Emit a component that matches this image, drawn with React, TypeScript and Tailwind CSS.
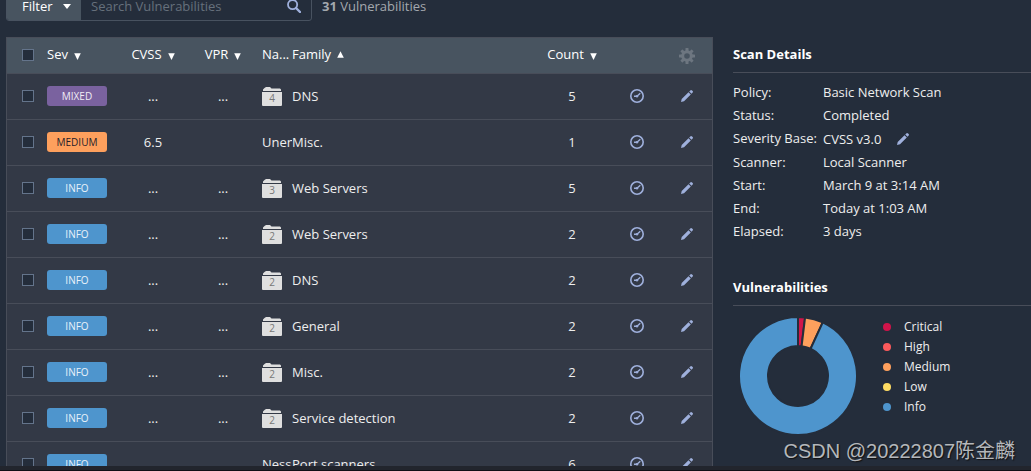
import React from 'react';

type Severity = 'MIXED' | 'MEDIUM' | 'INFO';

interface Vulnerability {
  severity: Severity;
  cvss: string;
  vpr: string;
  name?: string;
  group?: number;
  family: string;
  count: number;
}

const vulnerabilities: Vulnerability[] = [
  { severity: 'MIXED', cvss: '...', vpr: '...', group: 4, family: 'DNS', count: 5 },
  { severity: 'MEDIUM', cvss: '6.5', vpr: '', name: 'Unen', family: 'Misc.', count: 1 },
  { severity: 'INFO', cvss: '...', vpr: '...', group: 3, family: 'Web Servers', count: 5 },
  { severity: 'INFO', cvss: '...', vpr: '...', group: 2, family: 'Web Servers', count: 2 },
  { severity: 'INFO', cvss: '...', vpr: '...', group: 2, family: 'DNS', count: 2 },
  { severity: 'INFO', cvss: '...', vpr: '...', group: 2, family: 'General', count: 2 },
  { severity: 'INFO', cvss: '...', vpr: '...', group: 2, family: 'Misc.', count: 2 },
  { severity: 'INFO', cvss: '...', vpr: '...', group: 2, family: 'Service detection', count: 2 },
  { severity: 'INFO', cvss: '', vpr: '', name: 'Ness', family: 'Port scanners', count: 6 },
];

const badgeStyles: Record<Severity, string> = {
  MIXED: 'bg-[#7a629f] text-[#f0ecf5]',
  MEDIUM: 'bg-[#fea05d] text-[#26202a]',
  INFO: 'bg-[#4e95cd] text-[#e8f2fa]',
};

const details = [
  { label: 'Policy:', value: 'Basic Network Scan' },
  { label: 'Status:', value: 'Completed' },
  { label: 'Severity Base:', value: 'CVSS v3.0', editable: true },
  { label: 'Scanner:', value: 'Local Scanner' },
  { label: 'Start:', value: 'March 9 at 3:14 AM' },
  { label: 'End:', value: 'Today at 1:03 AM' },
  { label: 'Elapsed:', value: '3 days' },
];

const legend = [
  { label: 'Critical', dot: 'bg-[#d0144a]' },
  { label: 'High', dot: 'bg-[#fb5a5c]' },
  { label: 'Medium', dot: 'bg-[#fea05d]' },
  { label: 'Low', dot: 'bg-[#fedb63]' },
  { label: 'Info', dot: 'bg-[#4e95cd]' },
];

function SortArrow({ up = false }: { up?: boolean }) {
  return (
    <svg viewBox="0 0 7 7" className={up ? 'ml-1.5 inline h-[7px] w-[7px] align-[1px]' : 'ml-1.5 inline h-[7px] w-[7px] align-[-1px]'} fill="#fff" aria-hidden="true">
      <path d={up ? 'M.2 6.8 3.5 .3 6.8 6.8z' : 'M.2 .3H6.8L3.5 7z'} />
    </svg>
  );
}

function Pencil() {
  return (
    <svg viewBox="0 0 12 12" className="h-3 w-3" fill="#9fb0dc" aria-hidden="true">
      <path d="M0 12 .7 9 7.5 2.3 9.8 4.5 3 11.3zM8.2 1.6 9.6.3Q10.3-.2 11 .4L11.7 1.1Q12.2 1.7 11.7 2.4L10.5 3.8z" />
    </svg>
  );
}

function Clock() {
  return (
    <svg viewBox="0 0 14 14" className="h-3.5 w-3.5" fill="none" stroke="#9fb0dc" aria-hidden="true">
      <circle cx="7" cy="7" r="6.2" strokeWidth="1.6" />
      <path d="M4 7.2H6.9L10.3 4.3" strokeWidth="1.4" />
      <circle cx="7" cy="7.3" r="1.2" fill="#9fb0dc" stroke="none" />
    </svg>
  );
}

function Gear() {
  return (
    <svg viewBox="0 0 16 16" className="h-4 w-4" aria-hidden="true">
      <g fill="#6d7680">
        <rect x="6.5" y="0" width="3" height="16" rx=".6" />
        <rect x="6.5" y="0" width="3" height="16" rx=".6" transform="rotate(45 8 8)" />
        <rect x="6.5" y="0" width="3" height="16" rx=".6" transform="rotate(90 8 8)" />
        <rect x="6.5" y="0" width="3" height="16" rx=".6" transform="rotate(135 8 8)" />
        <circle cx="8" cy="8" r="5.8" />
      </g>
      <circle cx="8" cy="8" r="2.8" fill="#485460" />
    </svg>
  );
}

function Folder({ count }: { count: number }) {
  return (
    <div className="relative h-[19px] w-5">
      <svg viewBox="0 0 20 19" className="h-[19px] w-5" fill="#dfdfdf" aria-hidden="true">
        <path d="M1 4V2.5L2.5 1 4 0H8L9.5 1.5H18L19 2.5V4zM0 5H20V18Q20 19 19 19H1Q0 19 0 18z" />
      </svg>
      <span className="absolute inset-x-0 bottom-0 text-center text-[10px] leading-[15px] text-[#777]">{count}</span>
    </div>
  );
}

function Tick({ label }: { label: string }) {
  return (
    <input
      type="checkbox"
      aria-label={label}
      className="block h-3 w-3 appearance-none border border-[#64748b] bg-[#242d3b] checked:bg-[#4e95cd]"
    />
  );
}

function point(radius: number, degrees: number) {
  const a = (degrees * Math.PI) / 180;
  return `${(59 + radius * Math.sin(a)).toFixed(2)} ${(59 - radius * Math.cos(a)).toFixed(2)}`;
}

function slice(from: number, to: number) {
  const large = to - from > 180 ? 1 : 0;
  return `M${point(59, from)}A59 59 0 ${large} 1 ${point(59, to)}L${point(30, to)}A30 30 0 ${large} 0 ${point(30, from)}Z`;
}

function Donut() {
  return (
    <svg viewBox="0 0 118 118" className="h-[118px] w-[118px] shrink-0" stroke="#242d3b" strokeWidth="2" role="img" aria-label="Vulnerabilities">
      <path d={slice(0, 6.9)} fill="#d0144a" />
      <path d={slice(6.9, 24.8)} fill="#fea05d" />
      <path d={slice(24.8, 360)} fill="#4e95cd" />
    </svg>
  );
}

function Toolbar() {
  return (
    <div className="-mt-[9px] flex h-[30px] items-center">
      <div className="flex h-full w-[306px] overflow-hidden rounded-[3px] border border-[#485260]">
        <button type="button" className="flex w-[74px] items-center justify-between bg-[#485460] pr-2.5 pl-[15px] text-white">
          Filter
          <svg viewBox="0 0 8 5" className="h-[5px] w-2" fill="#fff" aria-hidden="true">
            <path d="M0 0H8L4 5z" />
          </svg>
        </button>
        <input
          type="text"
          aria-label="Search Vulnerabilities"
          placeholder="Search Vulnerabilities"
          className="min-w-0 flex-1 bg-transparent pl-2.5 text-white outline-none placeholder:text-[#66707c]"
        />
        <button type="button" aria-label="Search" className="pr-2.5">
          <svg viewBox="0 0 14 14" className="h-3.5 w-3.5" fill="none" stroke="#9fb0dc" aria-hidden="true">
            <circle cx="5.6" cy="5.6" r="4.6" strokeWidth="1.8" />
            <path d="M9 9 13 13" strokeWidth="2.4" strokeLinecap="round" />
          </svg>
        </button>
      </div>
      <p className="ml-2.5 text-[#a3a8ae]">
        <b>31</b> Vulnerabilities
      </p>
    </div>
  );
}

function VulnerabilityTable() {
  return (
    <div className="mt-4 border border-[#484d59] bg-[#333946]">
      <table className="w-full table-fixed border-separate border-spacing-0 text-[#eeeeee]">
        <colgroup>
          <col className="w-[35px]" />
          <col className="w-[76px]" />
          <col className="w-[70px]" />
          <col className="w-[70px]" />
          <col className="w-[34px]" />
          <col />
          <col className="w-20" />
          <col className="w-[50px]" />
          <col className="w-[50px]" />
        </colgroup>
        <thead>
          <tr className="h-9 bg-[#485460] text-white *:border-b *:border-[#484d59] *:p-0 *:pb-1 *:font-normal">
            <th className="text-left"><div className="pt-0.5 pl-[15px]"><Tick label="Select all" /></div></th>
            <th className="text-left"><div className="pl-[5px]">Sev<SortArrow /></div></th>
            <th>CVSS<SortArrow /></th>
            <th>VPR<SortArrow /></th>
            <th className="text-left"><div className="pl-1">Na...</div></th>
            <th className="text-left">Family<SortArrow up /></th>
            <th>Count<SortArrow /></th>
            <th />
            <th><button type="button" aria-label="Settings" className="flex w-full justify-center pt-1"><Gear /></button></th>
          </tr>
        </thead>
        <tbody>
          {vulnerabilities.map((v, i) => (
            <tr key={i} className="h-[46px] *:border-b *:border-[#484d59] *:p-0 *:pb-px">
              <td><div className="pl-[15px]"><Tick label={`Select ${v.family}`} /></div></td>
              <td>
                <div className="pl-[5px]">
                  <span className={`block h-5 w-[60px] rounded-[3px] text-center text-[10px] leading-5 ${badgeStyles[v.severity]}`}>{v.severity}</span>
                </div>
              </td>
              <td className="text-center">{v.cvss}</td>
              <td className="text-center">{v.vpr}</td>
              <td>
                <div className="ml-1 overflow-hidden">{v.group ? <Folder count={v.group} /> : v.name}</div>
              </td>
              <td>{v.family}</td>
              <td className="text-center">{v.count}</td>
              <td><button type="button" aria-label="Snooze" className="flex w-full justify-center"><Clock /></button></td>
              <td><button type="button" aria-label="Modify" className="flex w-full justify-center"><Pencil /></button></td>
            </tr>
          ))}
        </tbody>
      </table>
    </div>
  );
}

function Sidebar() {
  return (
    <aside className="w-[298px] shrink-0 pt-9">
      <h2 className="h-[37px] border-b border-[#484d59] leading-9 font-bold text-white">Scan Details</h2>
      <dl className="mt-2 text-[#eeeeee]">
        {details.map((d) => (
          <div key={d.label} className="flex leading-[23px]">
            <dt className="w-[90px] shrink-0">{d.label}</dt>
            <dd className={d.editable ? 'flex h-6 items-center' : ''}>
              {d.value}
              {d.editable && (
                <button type="button" aria-label="Edit severity base" className="ml-4"><Pencil /></button>
              )}
            </dd>
          </div>
        ))}
      </dl>
      <h2 className="mt-[26px] h-[37px] border-b border-[#484d59] leading-9 font-bold text-white">Vulnerabilities</h2>
      <div className="mt-[11px] flex pl-1.5">
        <Donut />
        <ul className="ml-[26px] text-[12px] leading-5 text-[#eeeeee]">
          {legend.map((item) => (
            <li key={item.label} className="flex items-center gap-[13px]">
              <span className={`h-2 w-2 rounded-full ${item.dot}`} />
              {item.label}
            </li>
          ))}
        </ul>
      </div>
    </aside>
  );
}

export default function App() {
  return (
    <div className="relative flex h-screen flex-col overflow-hidden bg-[#242d3b] font-['Open_Sans','Noto_Sans_CJK_SC',sans-serif] text-[13px] leading-[18px]">
      <div className="flex min-h-0 flex-1 gap-5 overflow-hidden pl-1.5">
        <main className="min-w-0 flex-1">
          <Toolbar />
          <VulnerabilityTable />
        </main>
        <Sidebar />
      </div>
      <footer className="h-[5px] shrink-0 border-b border-[#0f1015] bg-[#22252d]" />
      <p className="absolute right-4 bottom-2 font-['Liberation_Sans','Noto_Sans_CJK_SC',sans-serif] text-[20px] leading-6 text-[#b4b7bb] [text-shadow:1px_1px_1px_#111]">
        CSDN @20222807陈金麟
      </p>
    </div>
  );
}
